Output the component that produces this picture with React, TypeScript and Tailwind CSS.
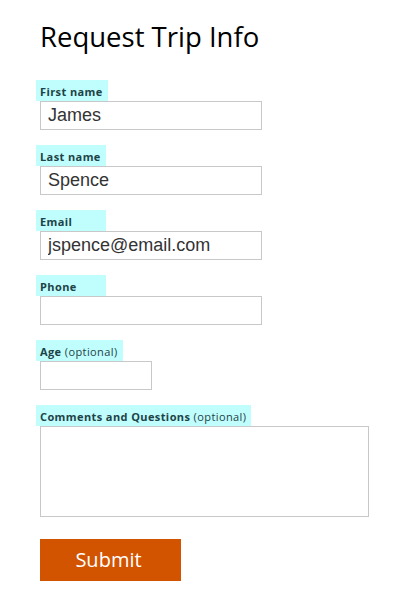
const labelCls =
  "inline-block h-[21px] min-w-[70px] -ml-[4px] pl-[4px] pr-[5px] pt-[2px] leading-[19px] text-[11px] font-bold text-[#1d4347] bg-[#c0fdfd] font-['Open_Sans',sans-serif] tracking-[0.4px]";
const inputCls =
  "block h-[29px] border border-[#c8c8c8] bg-white pl-[7px] text-[18px] text-[#333] font-['Liberation_Sans',Arial,sans-serif] outline-none";

function Field({
  label,
  optional,
  value,
  width = "w-[222px]",
}: {
  label: string;
  optional?: boolean;
  value?: string;
  width?: string;
}) {
  return (
    <div className="flex flex-col items-start">
      <span className={labelCls}>
        {label}
        {optional && <span className="font-normal"> (optional)</span>}
      </span>
      <input className={`${inputCls} ${width}`} defaultValue={value} />
    </div>
  );
}

export default function App() {
  return (
    <div className="w-[400px] h-[600px] bg-white pl-[40px] pt-[20px]">
      <h1 className="text-[27.5px] leading-[34px] text-black font-['Open_Sans',sans-serif] font-normal">
        Request Trip Info
      </h1>
      <form className="mt-[26px] flex flex-col gap-[15px]" onSubmit={(e) => e.preventDefault()}>
        <Field label="First name" value="James" />
        <Field label="Last name" value="Spence" />
        <Field label="Email" value="jspence@email.com" />
        <Field label="Phone" />
        <Field label="Age" optional width="w-[112px]" />
        <div className="flex flex-col items-start">
          <span className={labelCls}>
            Comments and Questions<span className="font-normal"> (optional)</span>
          </span>
          <textarea className="block w-[329px] h-[91px] border border-[#c8c8c8] resize-none outline-none" />
        </div>
        <button
          type="submit"
          className="mt-[7px] w-[141px] h-[42px] bg-[#d35400] text-white text-[20px] font-['Open_Sans',sans-serif] leading-[42px] pr-[4px]"
        >
          Submit
        </button>
      </form>
    </div>
  );
}
